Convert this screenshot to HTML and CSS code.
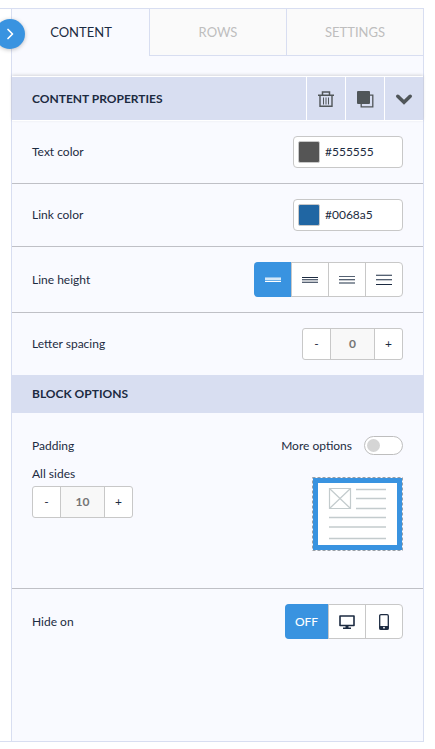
FILE: index.html
```html
<!DOCTYPE html>
<html lang="en">
	<head>
		<meta charset="utf-8" />
		<meta name="viewport" content="width=device-width, initial-scale=1" />
		<title>Content properties</title>
		<link rel="stylesheet" href="styles.css">
	</head>
	<body>
		<div class="frame">
			<button class="collapse" type="button" aria-label="Collapse panel">
				<svg width="30" height="30" viewBox="0 0 30 30"><path d="M13 10.5l4.5 4.5-4.5 4.5" fill="none" stroke="#fff" stroke-width="1.7" stroke-linecap="round" stroke-linejoin="round"/></svg>
			</button>
			<div class="panel">
				<div class="tabs" role="tablist">
					<button class="tab active" type="button" role="tab" aria-selected="true">CONTENT</button>
					<button class="tab" type="button" role="tab" aria-selected="false">ROWS</button>
					<button class="tab" type="button" role="tab" aria-selected="false">SETTINGS</button>
				</div>

				<div class="section-head with-actions">
					<h2>CONTENT PROPERTIES</h2>
					<div class="actions">
						<button type="button" aria-label="Delete">
							<svg width="18" height="18" viewBox="0 0 18 18" fill="none" stroke="#505659">
								<path d="M1 5.2h16M5.5 5V2h7v3" stroke-width="1.5"/>
								<path d="M3 5.5V16.3h12V5.5" stroke-width="1.4"/>
								<path d="M6.5 7.5v7M9 7.5v7M11.5 7.5v7" stroke-width="1"/>
							</svg>
						</button>
						<button type="button" aria-label="Duplicate">
							<svg width="18" height="18" viewBox="0 0 18 18">
								<path d="M14 5.2h2.800v11.600H5.200V14" fill="none" stroke="#505659" stroke-width="1.3"/>
								<rect x="1" y="1" width="13" height="13" rx="1" fill="#505659"/>
							</svg>
						</button>
						<button type="button" aria-label="Close section">
							<svg width="18" height="18" viewBox="0 0 18 18"><path d="M2.8 6.3L9 12.2l6.2-5.9" fill="none" stroke="#505659" stroke-width="3.6" stroke-linecap="round"/></svg>
						</button>
					</div>
				</div>

				<div class="row">
					<label for="textColor">Text color</label>
					<div class="color-box">
						<button class="swatch gray" type="button" aria-label="Pick text color"></button>
						<input id="textColor" type="text" value="#555555" />
					</div>
				</div>
				<div class="row">
					<label for="linkColor">Link color</label>
					<div class="color-box">
						<button class="swatch blue" type="button" aria-label="Pick link color"></button>
						<input id="linkColor" type="text" value="#0068a5" />
					</div>
				</div>
				<div class="row">
					<span id="lineHeight">Line height</span>
					<div class="segments" role="group" aria-labelledby="lineHeight">
						<button class="active" type="button" aria-label="Tight">
							<svg width="16" height="13" viewBox="0 0 16 13"><path d="M0 4h16v1H0z" fill="#8fc1ec"/><path d="M0 5h16v2H0z" fill="#d3e7f8"/><path d="M0 7h16v1H0z" fill="#6aade6"/><path d="M0 8h16v1H0z" fill="#fff"/></svg>
						</button>
						<button type="button" aria-label="Normal">
							<svg width="16" height="13" viewBox="0 0 16 13"><path d="M0 4h16v1H0z" fill="#1c2b41"/><path d="M0 6h16v1H0zM0 9h16v1H0z" fill="#566273"/><path d="M0 7h16v2H0z" fill="#c4c8ce"/></svg>
						</button>
						<button type="button" aria-label="Loose">
							<svg width="16" height="13" viewBox="0 0 16 13"><path d="M0 3h16v1H0zM0 6h16v1H0z" fill="#566273"/><path d="M0 7h16v1H0z" fill="#c4c8ce"/><path d="M0 9h16v2H0z" fill="#8e97a2"/></svg>
						</button>
						<button type="button" aria-label="Double">
							<svg width="16" height="13" viewBox="0 0 16 13"><path d="M0 1h16v1H0zM0 7h16v1H0z" fill="#c4c8ce"/><path d="M0 2h16v1H0zM0 6h16v1H0z" fill="#566273"/><path d="M0 11h16v1H0z" fill="#1c2b41"/></svg>
						</button>
					</div>
				</div>
				<div class="row last">
					<label for="letterSpacing">Letter spacing</label>
					<div class="stepper">
						<button type="button">-</button>
						<input id="letterSpacing" type="text" value="0" />
						<button type="button">+</button>
					</div>
				</div>

				<div class="section-head">
					<h2>BLOCK OPTIONS</h2>
				</div>

				<div class="padding-block">
					<div class="padding-top">
						<span>Padding</span>
						<label class="more">More options <input class="toggle" type="checkbox" /></label>
					</div>
					<div class="padding-body">
						<div class="sides">
							<label for="allSides">All sides</label>
							<div class="stepper">
								<button type="button">-</button>
								<input id="allSides" type="text" value="10" />
								<button type="button">+</button>
							</div>
						</div>
						<svg class="preview" width="91" height="74" viewBox="0 0 91 74">
							<rect x="1" y="1" width="89" height="72" fill="#3993e0"/>
							<rect x="6" y="6" width="79" height="62" fill="#fff"/>
							<rect x="0.5" y="0.5" width="90" height="73" fill="none" stroke="#999fa5" stroke-dasharray="3 2"/>
							<g fill="none" stroke="#c3cbcd">
								<path d="M17.5 11.5h21v20h-21zM17.5 11.5l21 20M38.5 11.5l-21 20" stroke-width="1.2"/>
								<path d="M44 12.5h30M44 21.5h30M44 31.5h30M17 40.5h57M17 50h57M17 61.5h57" stroke-width="1.3"/>
							</g>
						</svg>
					</div>
				</div>

				<div class="row last">
					<span id="hideOn">Hide on</span>
					<div class="segments" role="group" aria-labelledby="hideOn">
						<button class="off active" type="button">OFF</button>
						<button type="button" aria-label="Desktop">
							<svg width="16" height="16" viewBox="0 0 16 16"><path d="M1 2h14v9.500H1z" fill="none" stroke="#1c2b41" stroke-width="1.6" stroke-linejoin="round"/><path d="M6.500 12h3v1.500h2.500V15H4v-1.500h2.500z" fill="#1c2b41"/></svg>
						</button>
						<button type="button" aria-label="Mobile">
							<svg width="16" height="16" viewBox="0 0 16 16"><rect x="3.700" y="0.700" width="8.600" height="14.600" rx="1.200" fill="none" stroke="#1c2b41" stroke-width="1.300"/><path d="M3.500 12h9v3.500h-9z" fill="#1c2b41"/><circle cx="8" cy="13.700" r="0.900" fill="#fff"/></svg>
						</button>
					</div>
				</div>
			</div>
		</div>
	</body>
</html>
```

FILE: styles.css
```css
*{
	box-sizing: border-box;
}
body{
	margin: 0;
	min-height: 100vh;
	padding: 8px 11px 7px 0;
	display: flex;
	background: #fff;
	color: #1c2b41;
	font: 12px/16px Lato, "Open Sans", sans-serif;
}
button, input{
	margin: 0;
	padding: 0;
	border: 0;
	font: inherit;
	color: inherit;
}
button{
	cursor: pointer;
}
svg{
	display: block;
}
.frame{
	position: relative;
	flex: 1;
	display: flex;
	padding-left: 11px;
	border: 1px solid #d8def1;
	border-left: 0;
}
.panel{
	flex: 1;
	min-width: 0;
	border-left: 1px solid #d8def1;
	background: #f9faff;
}

/* round button over the left edge */
.collapse{
	position: absolute;
	left: -5px;
	top: 10px;
	width: 30px;
	height: 30px;
	border-radius: 50%;
	background: #3993e0;
	box-shadow: 0 1px 4px rgba(0,0,0,0.25);
}

/* tabs */
.tabs{
	display: grid;
	grid-template-columns: repeat(3, 1fr);
	height: 47px;
	margin-bottom: 20px;
}
.tab{
	border-left: 1px solid #d8def1;
	border-bottom: 1px solid #d8def1;
	background: #fafafa;
	color: #bebebe;
	font-size: 13px;
}
.tab.active{
	border-color: transparent;
	background: none;
	color: #1c2b41;
}

/* section headers */
.section-head{
	display: flex;
	align-items: center;
	justify-content: space-between;
	min-height: 38px;
	padding-left: 20px;
	background: #d8def1;
}
.section-head h2{
	margin: 0;
	font-size: 12px;
	font-weight: 700;
}
.with-actions{
	align-items: stretch;
	height: 45px;
	border-top: 1px solid #fff;
	border-bottom: 1px solid #fff;
	box-shadow: 0 -1px 3px rgba(0,0,0,0.15);
}
.with-actions h2{
	align-self: center;
}
.actions{
	display: flex;
}
.actions button{
	display: flex;
	align-items: center;
	justify-content: center;
	width: 39px;
	border-left: 1px solid #fff;
	background: none;
}

/* option rows */
.row{
	display: flex;
	align-items: center;
	justify-content: space-between;
	padding: 15px 20px;
	border-bottom: 1px solid #bfc0c6;
}
.row.last{
	border-bottom: 0;
}
.color-box{
	display: flex;
	align-items: center;
	gap: 5px;
	width: 110px;
	height: 32px;
	padding-left: 4px;
	border: 1px solid #c8c8c8;
	border-radius: 4px;
	background: #fff;
}
.color-box input{
	flex: 1;
	min-width: 0;
	background: none;
}
.swatch{
	width: 22px;
	height: 22px;
	border: 1px solid #c8c8c8;
	border-radius: 2px;
}
.swatch.gray{
	background: #555;
}
.swatch.blue{
	background: #2066a3;
}
.segments{
	display: flex;
	height: 35px;
	border: 1px solid #c8c8c8;
	border-radius: 4px;
	background: #fff;
}
.segments button{
	display: flex;
	align-items: center;
	justify-content: center;
	width: 37px;
	border-left: 1px solid #c8c8c8;
	background: none;
}
.segments .active{
	margin: -1px 0 -1px -1px;
	border-left: 0;
	border-radius: 4px 0 0 4px;
	background: #3993e0;
	color: #fff;
}
.segments .off{
	width: 43px;
	font-weight: 500;
}
.stepper{
	display: flex;
	width: 101px;
	height: 32px;
	border: 1px solid #c8c8c8;
	border-radius: 3px;
	background: #fff;
}
.stepper button{
	width: 27px;
	background: none;
}
.stepper input{
	flex: 1;
	min-width: 0;
	border: solid #c8c8c8;
	border-width: 0 1px;
	background: #f8f8f8;
	color: #757575;
	font-weight: 700;
	text-align: center;
}

/* padding */
.padding-block{
	padding: 23px 20px 37px;
	border-bottom: 1px solid #bfc0c6;
}
.padding-top{
	display: flex;
	align-items: center;
	justify-content: space-between;
	margin-bottom: 11px;
}
.more{
	display: flex;
	align-items: center;
	gap: 12px;
}
.toggle{
	appearance: none;
	width: 39px;
	height: 19px;
	padding: 2px;
	border: 1px solid #bebebe;
	border-radius: 10px;
	background: #fff;
}
.toggle::before{
	content: "";
	display: block;
	width: 13px;
	height: 13px;
	border-radius: 50%;
	background: #d5d5d5;
}
.toggle:checked::before{
	margin-left: auto;
	background: #3993e0;
}
.padding-body{
	display: flex;
	justify-content: space-between;
}
.sides{
	display: flex;
	flex-direction: column;
	gap: 4px;
}
.preview{
	margin-top: 11px;
}
```
